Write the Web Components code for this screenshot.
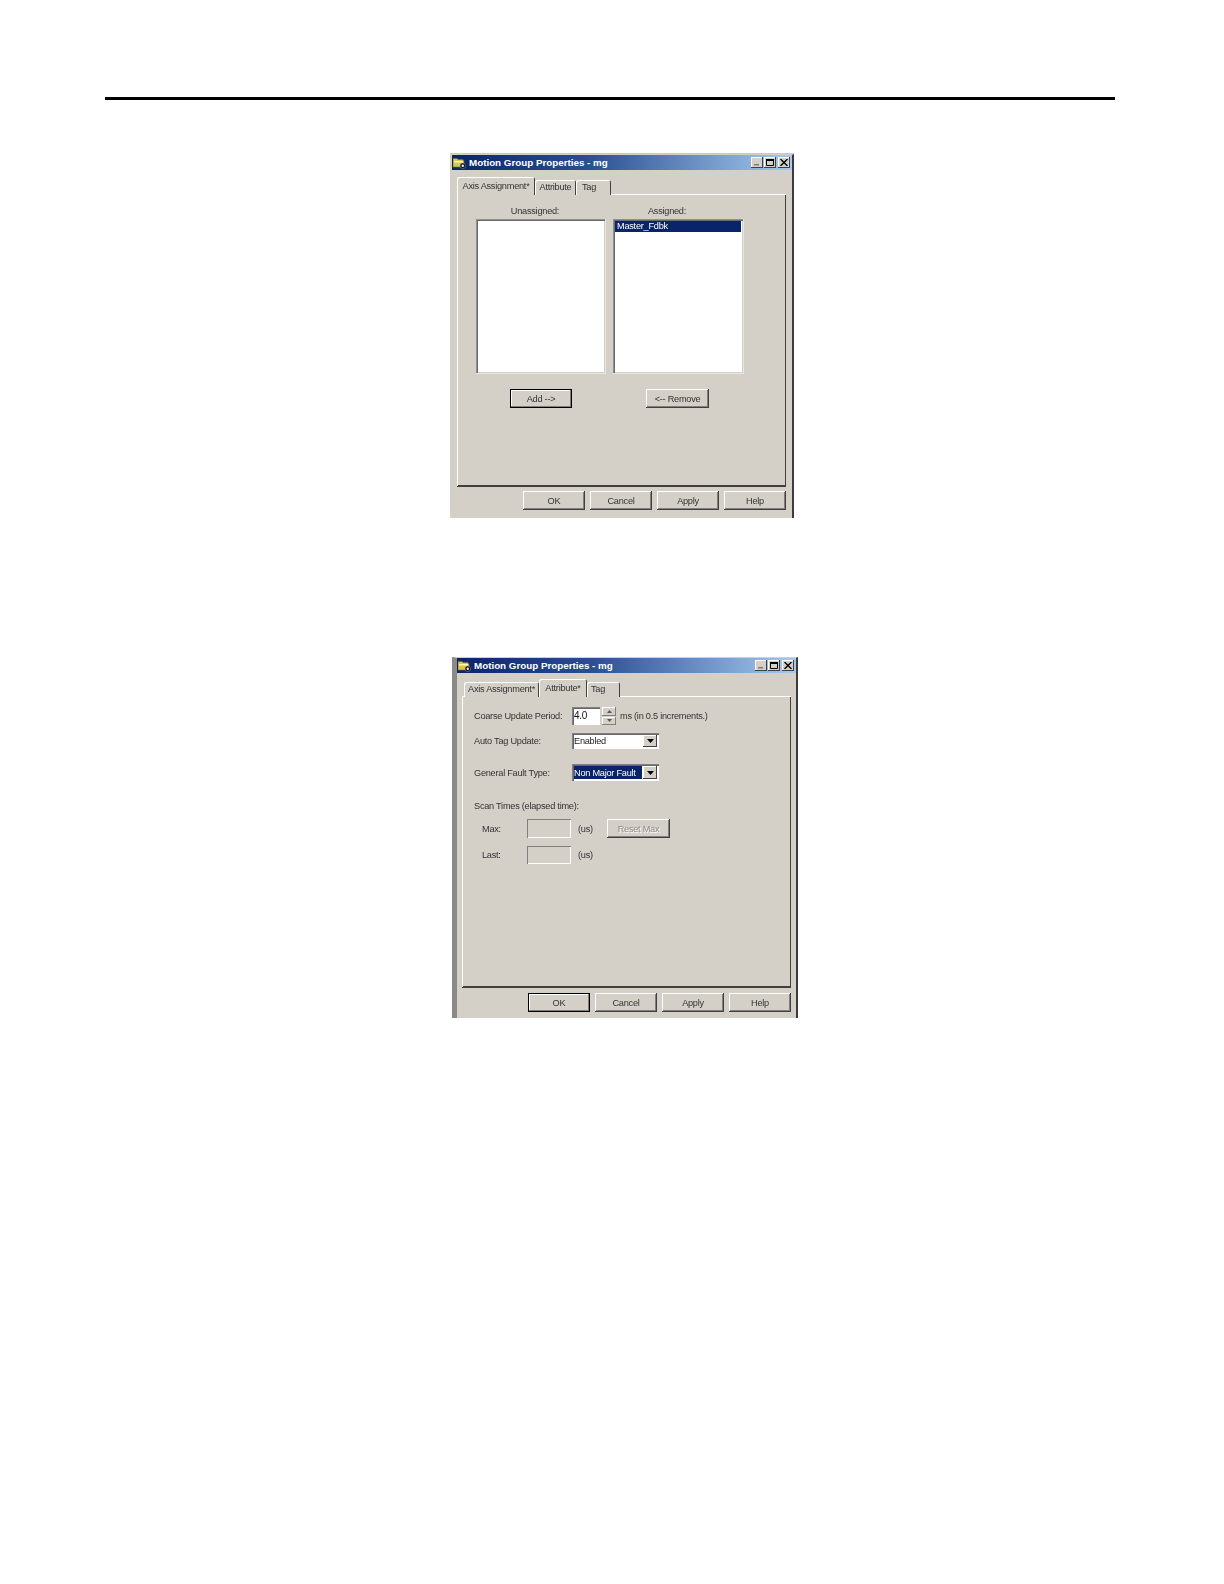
<!DOCTYPE html>
<html>
<head>
<meta charset="utf-8">
<title>Motion Group Properties</title>
<style>
  html, body { margin: 0; padding: 0; background: #fff; }
  body { font: 9.2px "Liberation Sans", Arial, sans-serif; letter-spacing: -0.25px; color: #333; }
</style>
</head>
<body>
<doc-page>
  <prop-dialog style="--left:450px;--top:54px;--height:364px;--width:344px;--edge-left:2px;--edge-color:#d4d0c8;--edge-right:2px;--pad-right:5px;--edge-top:#c8c8c8;--tabs-gap:7px;--foot-gap:5px">
    <dlg-tab slot="tabs" active style="--w:78px">Axis Assignment*</dlg-tab>
    <dlg-tab slot="tabs" style="--w:41px">Attribute</dlg-tab>
    <dlg-tab slot="tabs" left style="--w:35px;--tag-pad:6px">Tag</dlg-tab>
    <axis-panel></axis-panel>
  </prop-dialog>
  <prop-dialog style="--left:452px;--top:139px;--height:361px;--width:346px;--edge-left:5px;--edge-color:#8a8a8a;--edge-right:2px;--pad-right:4px;--edge-top:#fff;--tab-indent:2px;--panel-h:291px;--tag-pad:4px" default-ok>
    <dlg-tab slot="tabs" style="--w:75px">Axis Assignment*</dlg-tab>
    <dlg-tab slot="tabs" active style="--w:48px">Attribute*</dlg-tab>
    <dlg-tab slot="tabs" left style="--w:33px">Tag</dlg-tab>
    <attribute-panel></attribute-panel>
  </prop-dialog>
</doc-page>

<script>
class DocPage extends HTMLElement {
  constructor() {
    super();
    this.attachShadow({mode: "open"}).innerHTML = `
      <style>
        :host { display: block; width: 1224px; height: 1584px; padding-top: 97px; box-sizing: border-box; overflow: hidden; }
        .rule { width: 1010px; height: 3px; margin-left: 105px; background: #000; }
      </style>
      <div class="rule"></div>
      <slot></slot>`;
  }
}

class DlgButton extends HTMLElement {
  constructor() {
    super();
    this.attachShadow({mode: "open"}).innerHTML = `
      <style>
        :host {
          display: flex; align-items: center; justify-content: center; box-sizing: border-box;
          width: var(--w, 62px); height: var(--h, 19px); flex: none;
          background: #d4d0c8; color: #333;
          box-shadow: inset -1px -1px #404040, inset 1px 1px #fff, inset -2px -2px #808080;
        }
        :host([default]) { box-shadow: inset 0 0 0 1px #000, inset -2px -2px #808080, inset 2px 2px #fff; }
        :host([disabled]) { color: #8f8b84; text-shadow: 1px 1px #fff; }
      </style>
      <slot></slot>`;
  }
}

class DlgTab extends HTMLElement {
  constructor() {
    super();
    this.attachShadow({mode: "open"}).innerHTML = `
      <style>
        :host {
          display: flex; align-items: center; justify-content: center; box-sizing: border-box; flex: none;
          width: var(--w); height: 15px; background: #d4d0c8; padding-bottom: 1px;
          box-shadow: inset 1px 1px #fff, inset -1px 0 #404040;
          border-radius: 2px 2px 0 0;
        }
        :host([left]) { justify-content: flex-start; padding-left: var(--tag-pad, 5px); }
        :host([active]) { height: 18px; position: relative; z-index: 1; padding-bottom: 1px; }
      </style>
      <slot></slot>`;
  }
}

class ListBox extends HTMLElement {
  constructor() {
    super();
    this.attachShadow({mode: "open"}).innerHTML = `
      <style>
        :host {
          display: block; box-sizing: border-box; height: 155px; background: #fff; padding: 2px;
          box-shadow: inset 1px 1px #909090, inset 2px 2px #6a6a6a, inset -1px -1px #d4d0c8;
          border-bottom: 1px solid #e8e6e0; border-right: 1px solid #e8e6e0;
        }
      </style>
      <slot></slot>`;
  }
}

class ComboBox extends HTMLElement {
  constructor() {
    super();
    this.attachShadow({mode: "open"}).innerHTML = `
      <style>
        :host {
          display: flex; box-sizing: border-box; width: 87px; height: var(--h, 16px); background: #fff; padding: 2px; flex: none;
          box-shadow: inset 1px 1px #808080, inset 2px 2px #666, inset -1px -1px #fff;
        }
        .val { flex: 1; display: flex; align-items: center; color: #222; }
        :host([selected]) .val { background: #0a246a; color: #fff; }
        .arrow {
          width: 14px; margin-left: 1px; background: #d4d0c8; display: flex; align-items: center; justify-content: center;
          box-shadow: inset -1px -1px #404040, inset 1px 1px #fff;
        }
        .arrow svg { display: block; }
      </style>
      <div class="val"><slot></slot></div>
      <div class="arrow"><svg width="7" height="4" viewBox="0 0 7 4"><path d="M0 0h7L3.5 4z" fill="#000"/></svg></div>`;
  }
}

class SpinBox extends HTMLElement {
  constructor() {
    super();
    this.attachShadow({mode: "open"}).innerHTML = `
      <style>
        :host { display: flex; flex: none; gap: 2px; height: 18px; }
        .val {
          box-sizing: border-box; width: 28px; background: #fff; padding: 2px 0 3px 2px; line-height: 13px; color: #111; font-size: 10px;
          box-shadow: inset 1px 1px #808080, inset 2px 2px #666, inset -1px -1px #fff;
        }
        .spin { width: 14px; display: flex; flex-direction: column; gap: 1px; }
        .spin div {
          flex: 1; background: #d4d0c8; display: flex; align-items: center; justify-content: center;
          box-shadow: inset -1px -1px #808080, inset 1px 1px #fff;
        }
        svg { display: block; }
      </style>
      <div class="val"><slot></slot></div>
      <div class="spin">
        <div><svg width="5" height="3" viewBox="0 0 5 3"><path d="M2.5 0L5 3H0z" fill="#555"/></svg></div>
        <div><svg width="5" height="3" viewBox="0 0 5 3"><path d="M0 0h5L2.5 3z" fill="#555"/></svg></div>
      </div>`;
  }
}

class ReadBox extends HTMLElement {
  constructor() {
    super();
    this.attachShadow({mode: "open"}).innerHTML = `
      <style>
        :host {
          display: block; flex: none; box-sizing: border-box; width: 44px; height: var(--h, 19px); background: #d4d0c8;
          box-shadow: inset 1px 1px #808080, inset -1px -1px #fff;
        }
      </style>`;
  }
}

class PropDialog extends HTMLElement {
  constructor() {
    super();
    this.attachShadow({mode: "open"}).innerHTML = `
      <style>
        :host {
          display: block; box-sizing: border-box; width: var(--width); height: var(--height);
          margin: var(--top) 0 0 var(--left);
          background: #d4d0c8; overflow: hidden;
          border-top: 1px solid #d4d0c8;
          border-left: var(--edge-left) solid var(--edge-color);
          border-right: var(--edge-right) solid #3c3c3c;
          box-shadow: 0 -1px var(--edge-top);
          filter: blur(0.35px);
        }
        .title {
          height: 15px; display: flex; align-items: center; padding: 0 2px 0 1px;
          background: linear-gradient(90deg, #0a246a 0%, #2a4f92 40%, #a6caf0 100%);
          color: #fff; font-weight: bold; font-size: 9.8px; letter-spacing: 0;
        }
        .title svg.folder { display: block; margin-right: 3px; flex: none; }
        .caption { flex: 1; }
        .ctl {
          width: 12px; height: 11px; margin-left: 1px; background: #d4d0c8; flex: none;
          box-shadow: inset -1px -1px #404040, inset 1px 1px #fff;
          display: flex; align-items: center; justify-content: center;
        }
        .ctl + .close { margin-left: 2px; }
        .ctl svg { display: block; }
        .body { padding: 0 var(--pad-right) 0 5px; }
        .tabs { display: flex; align-items: flex-end; height: 18px; margin-top: var(--tabs-gap, 6px); padding-left: var(--tab-indent, 0); position: relative; z-index: 1; }
        .panel {
          box-sizing: border-box; width: 329px; height: var(--panel-h, 292px); margin-top: -1px;
          box-shadow: inset 1px 1px #fff, inset -1px -1px #404040, 0 1px #404040;
        }
        .foot { display: flex; justify-content: flex-end; gap: 5px; width: 329px; margin-top: var(--foot-gap, 6px); }
      </style>
      <div class="title">
        <svg class="folder" width="13" height="12" viewBox="0 0 13 12">
          <path d="M0 1.5h4l1 1h5v1h1v6.5H0z" fill="#d8c850" stroke="#7a6a20" stroke-width=".6"/>
          <path d="M1 4h9v1.5H1z" fill="#fff6b0"/>
          <circle cx="9.8" cy="8.8" r="2.8" fill="#111" stroke="#bbb" stroke-width=".4"/>
          <circle cx="9.8" cy="8.8" r="1.2" fill="#eee"/>
        </svg>
        <span class="caption">Motion Group Properties - mg</span>
        <div class="ctl"><svg width="7" height="7" viewBox="0 0 7 7"><path d="M0 5h5v1.4H0z" fill="#777"/></svg></div>
        <div class="ctl"><svg width="8" height="7" viewBox="0 0 8 7"><path d="M.5 1.5h7v5h-7z" fill="none" stroke="#000"/><path d="M0 0h8v2H0z" fill="#000"/></svg></div>
        <div class="ctl close"><svg width="8" height="7" viewBox="0 0 8 7"><path d="M.5 0L7.5 7M7.5 0L.5 7" stroke="#000" stroke-width="1.4"/></svg></div>
      </div>
      <div class="body">
        <div class="tabs"><slot name="tabs"></slot></div>
        <div class="panel"><slot></slot></div>
        <div class="foot">
          <dlg-button id="ok">OK</dlg-button>
          <dlg-button>Cancel</dlg-button>
          <dlg-button>Apply</dlg-button>
          <dlg-button>Help</dlg-button>
        </div>
      </div>`;
    if (this.hasAttribute("default-ok")) this.shadowRoot.getElementById("ok").setAttribute("default", "");
  }
}

class AxisPanel extends HTMLElement {
  constructor() {
    super();
    this.attachShadow({mode: "open"}).innerHTML = `
      <style>
        :host { display: block; padding: 11px 0 0 19px; }
        .cols { display: grid; grid-template-columns: 130px 131px; column-gap: 7px; }
        .label { height: 12px; line-height: 12px; text-align: center; margin-bottom: 2px; }
        .l1 { padding-right: 12px; }
        .l2 { padding-right: 23px; }
        .sel { height: 11px; line-height: 11px; background: #0a246a; color: #fff; padding-left: 2px; }
        .btns { margin-top: 15px; }
        .add { margin-left: 34px; }
        .rem { margin-left: 33px; }
      </style>
      <div class="cols">
        <div class="label l1">Unassigned:</div>
        <div class="label l2">Assigned:</div>
        <list-box></list-box>
        <list-box><div class="sel">Master_Fdbk</div></list-box>
        <div class="btns"><dlg-button class="add" default>Add --&gt;</dlg-button></div>
        <div class="btns"><dlg-button class="rem" style="--w:63px">&lt;-- Remove</dlg-button></div>
      </div>`;
  }
}

class AttributePanel extends HTMLElement {
  constructor() {
    super();
    this.attachShadow({mode: "open"}).innerHTML = `
      <style>
        :host { display: block; padding: 11px 0 0 12px; }
        .row { display: flex; align-items: center; }
        .lab { width: 98px; flex: none; }
        .note { margin-left: 4px; }
        .r2 { margin-top: 8px; }
        .r3 { margin-top: 15px; }
        .scan { margin-top: 19px; height: 12px; line-height: 12px; }
        .r5 { margin-top: 7px; padding-left: 8px; }
        .r6 { margin-top: 8px; padding-left: 8px; }
        .short { width: 45px; flex: none; }
        .us { width: 36px; flex: none; padding-left: 7px; box-sizing: border-box; }
      </style>
      <div class="row"><div class="lab">Coarse Update Period:</div><spin-box>4.0</spin-box><div class="note">ms (in 0.5 increments.)</div></div>
      <div class="row r2"><div class="lab">Auto Tag Update:</div><combo-box>Enabled</combo-box></div>
      <div class="row r3"><div class="lab">General Fault Type:</div><combo-box selected style="--h:17px">Non Major Fault</combo-box></div>
      <div class="scan">Scan Times (elapsed time):</div>
      <div class="row r5"><div class="short">Max:</div><read-box></read-box><div class="us">(us)</div><dlg-button disabled style="--w:63px">Reset Max</dlg-button></div>
      <div class="row r6"><div class="short">Last:</div><read-box style="--h:18px"></read-box><div class="us">(us)</div></div>`;
  }
}

customElements.define("doc-page", DocPage);
customElements.define("dlg-button", DlgButton);
customElements.define("dlg-tab", DlgTab);
customElements.define("list-box", ListBox);
customElements.define("combo-box", ComboBox);
customElements.define("spin-box", SpinBox);
customElements.define("read-box", ReadBox);
customElements.define("axis-panel", AxisPanel);
customElements.define("attribute-panel", AttributePanel);
customElements.define("prop-dialog", PropDialog);
</script>
</body>
</html>
